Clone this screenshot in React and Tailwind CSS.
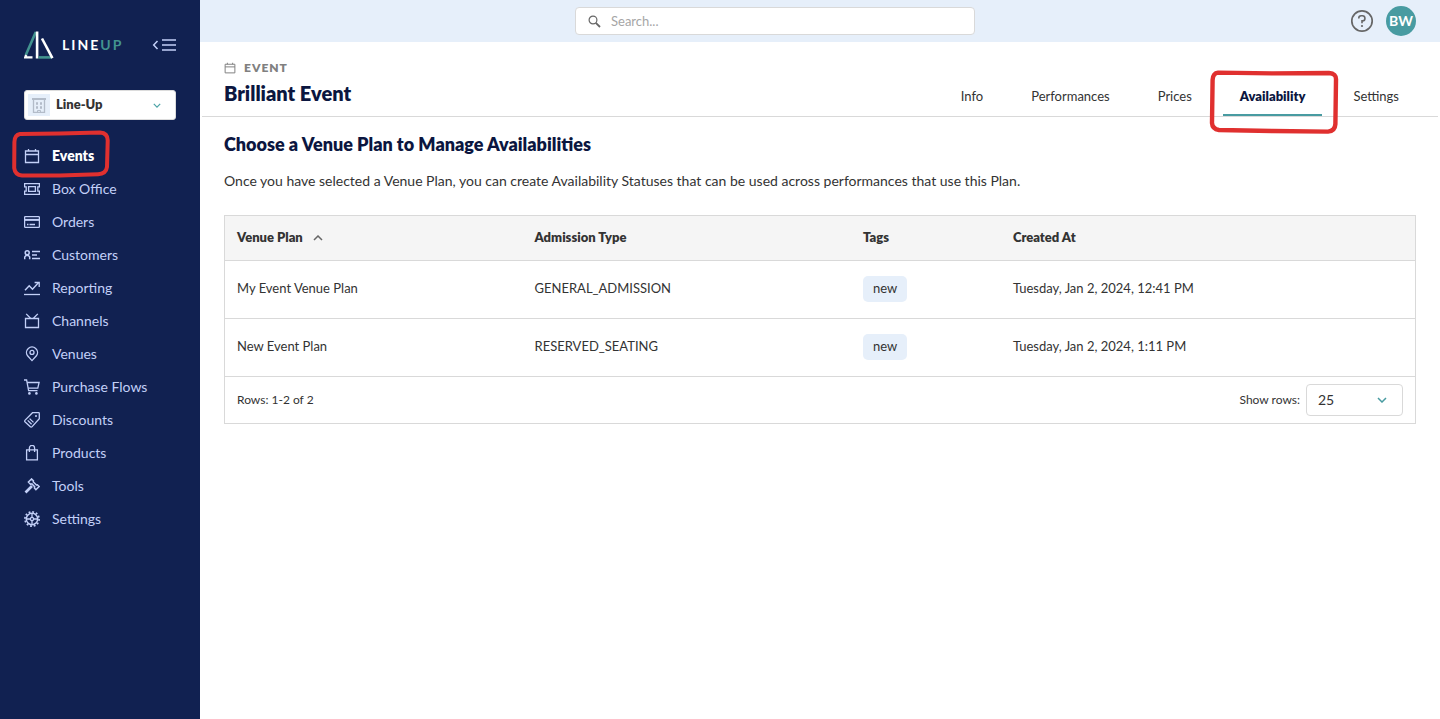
import React from 'react';

function Icon({ children, className = 'size-4', width = 1.3 }) {
  return (
    <svg
      viewBox="0 0 16 16"
      className={`${className} shrink-0`}
      fill="none"
      stroke="currentColor"
      strokeWidth={width}
      aria-hidden="true"
    >
      {children}
    </svg>
  );
}

const CalendarShape = () => (
  <>
    <path d="M1.5 3h13v11.5h-13zM1.5 6.5h13" />
    <path d="M4.5 1v2M11.5 1v2" />
  </>
);

const navItems = [
  { label: 'Events', active: true, icon: <CalendarShape /> },
  {
    label: 'Box Office',
    icon: (
      <>
        <path d="M.6 2.6h14.8v3.2h-1.6v4.4h1.6v3.2H.6v-3.2h1.6V5.8H.6z" />
        <path d="M4.6 5.6h6.8v4.8H4.6z" />
      </>
    ),
  },
  {
    label: 'Orders',
    icon: (
      <>
        <rect x=".6" y="2.6" width="14.8" height="10.8" rx=".8" />
        <path d="M1 5.9h14" strokeWidth="2" />
        <path d="M3 10.5h1.5M5.5 10.5H11" />
      </>
    ),
  },
  {
    label: 'Customers',
    icon: (
      <>
        <circle cx="3.2" cy="5.7" r="2" strokeWidth="1.5" />
        <path d="M.7 12.3v-2.2L2 8.4h2.4l1.3 1.7v2.2" strokeWidth="1.5" />
        <path d="M8 4.5h8M8 8h5M8 11.5h8" />
      </>
    ),
  },
  {
    label: 'Reporting',
    icon: (
      <>
        <path d="m1 10.3 4.2-4.6 3.3 3.5 6.1-6.6" strokeWidth="1.4" />
        <path d="M10.6 2.5h4.6v4.6" />
        <path d="M0 14.5h16" />
      </>
    ),
  },
  {
    label: 'Channels',
    icon: (
      <>
        <path d="M1.5 5.5h13v9h-13z" />
        <path d="m2.2.9 4.3 4.4M13.8.9 9.5 5.3" />
      </>
    ),
  },
  {
    label: 'Venues',
    icon: (
      <>
        <path d="M8 14.6 3.6 9.8a5.5 5.5 0 1 1 8.8 0z" />
        <circle cx="8" cy="6.4" r="2" />
      </>
    ),
  },
  {
    label: 'Purchase Flows',
    icon: (
      <>
        <path d="M0 1h2.6l2 10.6h8.9" />
        <path d="M3.1 3.5h12l-1.3 5.6H4.2" />
        <circle cx="5.4" cy="14.4" r="1.3" fill="currentColor" stroke="none" />
        <circle cx="12.4" cy="14.4" r="1.3" fill="currentColor" stroke="none" />
      </>
    ),
  },
  {
    label: 'Discounts',
    icon: (
      <>
        <path d="M15.3 1.4v5.4l-7.4 8.1a.9.9 0 0 1-1.3 0L.9 9.7a.9.9 0 0 1 0-1.3L8.5.7h6.1a.7.7 0 0 1 .7.7z" />
        <circle cx="12" cy="4.1" r="1" fill="currentColor" stroke="none" />
        <path d="m3.7 8.4 3.9 3.8M5.6 6.6l3.9 3.8" />
      </>
    ),
  },
  {
    label: 'Products',
    icon: (
      <>
        <path d="M2.6 4.9h10.8v10H2.6z" />
        <path d="M5.4 7V3a2.6 2.6 0 0 1 5.2 0v4" />
      </>
    ),
  },
  {
    label: 'Tools',
    icon: (
      <>
        <path
          d="m7.5.9-3.1 3.2 2.2 2.2 1.3-.4 2.8 2.8-.3 1.4 1.5 1.6 3.2-3.2-1.8-1.7-.9.2-3.2-3.3.2-.9z"
          strokeWidth="1.5"
        />
        <path d="M8 8 1.5 14.5" strokeWidth="2.6" />
      </>
    ),
  },
  {
    label: 'Settings',
    icon: (
      <>
        <circle cx="8" cy="8" r="5.7" strokeWidth="1.5" />
        <circle cx="8" cy="8" r="7.1" strokeWidth="1.7" strokeDasharray="1.86 1.86" />
        <circle cx="8" cy="8" r="1.6" />
        <path d="M8 2.5v4M8 9.5v4M2.5 8h4M9.5 8h4" />
      </>
    ),
  },
];

const tabs = ['Info', 'Performances', 'Prices', 'Availability', 'Settings'];

const plans = [
  { name: 'My Event Venue Plan', type: 'GENERAL_ADMISSION', tag: 'new', created: 'Tuesday, Jan 2, 2024, 12:41 PM' },
  { name: 'New Event Plan', type: 'RESERVED_SEATING', tag: 'new', created: 'Tuesday, Jan 2, 2024, 1:11 PM' },
];

function Chevron({ className }) {
  return (
    <svg viewBox="0 0 10 6" className={className} fill="none" stroke="currentColor" strokeWidth="1.5" aria-hidden="true">
      <path d="m1 1 4 4 4-4" />
    </svg>
  );
}

function Sidebar() {
  return (
    <aside className="flex w-50 shrink-0 flex-col bg-[#112151] px-6 pt-[30px]">
      <div className="flex h-[30px] items-center">
        <svg viewBox="0 0 30 30" className="size-[30px] shrink-0" fill="none" aria-hidden="true">
          <path d="M11.8 2 1.8 25" stroke="#43938f" strokeWidth="2.6" />
          <path d="m2.2 25-.9 2.4h7.2" stroke="#fff" strokeWidth="2.4" />
          <path d="M13.1 1.5v27" stroke="#fff" strokeWidth="2.6" />
          <path d="M14.5 27.4h13" stroke="#43938f" strokeWidth="2.6" />
          <path d="m18 8.5 10.4 19.6" stroke="#fff" strokeWidth="2.6" />
        </svg>
        <span className="ml-2 text-sm font-bold tracking-[2px] text-white">
          LINE<span className="text-[#43938f]">UP</span>
        </span>
        <button type="button" aria-label="Collapse menu" className="ml-auto text-[#c3d0f8]">
          <svg viewBox="0 0 24 12" className="h-3 w-6" fill="none" stroke="currentColor" aria-hidden="true">
            <path d="M5.5 2 1.7 6l3.8 4" strokeWidth="1.5" />
            <path d="M10 1h14M10 6h14M10 11h14" strokeWidth="1.4" />
          </svg>
        </button>
      </div>

      <button
        type="button"
        className="mt-[30px] flex h-[30px] items-center rounded-[3px] border border-[#dcdcdc] bg-white pl-[3px] text-[13px] font-extrabold text-[#333]"
      >
        <span className="flex size-[22px] items-center justify-center bg-[#e6effa]">
          <svg viewBox="0 0 14 15" className="h-[15px] w-[14px]" fill="none" stroke="#b3bcc9" aria-hidden="true">
            <path d="M0 1h14" strokeWidth="2" />
            <path d="M1.5 2v12.5h11V2" strokeWidth="1.3" />
            <path d="M4 5.5h2M8 5.5h2M4 9.5h2M8 9.5h2" strokeWidth="2.4" />
            <path d="M5.5 14.5v-2h3v2" />
          </svg>
        </span>
        <span className="ml-[6px]">Line-Up</span>
        <Chevron className="mr-[14px] ml-auto h-[5px] w-2 text-[#4aa3a6]" />
      </button>

      <nav className="mt-[19px]">
        <ul>
          {navItems.map((item) => (
            <li key={item.label} className="relative">
              <a
                href="#"
                className={`flex h-[33px] items-center gap-3 text-sm ${
                  item.active ? 'font-extrabold text-white' : 'text-[#c3d0f8]'
                }`}
              >
                <Icon className="size-4 text-[#c3d0f8]">{item.icon}</Icon>
                {item.label}
              </a>
              {item.active && (
                <svg
                  viewBox="0 0 98 48"
                  className="pointer-events-none absolute -top-[9px] -left-3 h-12 w-[98px]"
                  fill="none"
                  stroke="#e0302f"
                  strokeWidth="4"
                  strokeLinejoin="round"
                  aria-hidden="true"
                >
                  <path d="M8 4 48 3.4 88 2.5Q96 3 95.7 11L95 37Q94 44 86 44.2L48 45.5 10 45.4Q3 45 2.2 38L2.4 12Q2.6 5 8 4z" />
                </svg>
              )}
            </li>
          ))}
        </ul>
      </nav>
    </aside>
  );
}

function TopBar() {
  return (
    <div className="flex h-[42px] items-center bg-[#e6effa] pr-6">
      <div className="flex flex-1 justify-center">
        <div className="flex h-7 w-[400px] items-center rounded border border-[#d9d9d9] bg-white px-3">
          <svg viewBox="0 0 13 13" className="size-[13px] shrink-0 text-[#666]" fill="none" stroke="currentColor" aria-hidden="true">
            <circle cx="5" cy="5" r="3.9" strokeWidth="1.2" />
            <path d="m7.8 7.8 4.2 4.2" strokeWidth="1.8" />
          </svg>
          <input
            type="text"
            aria-label="Search"
            placeholder="Search..."
            className="ml-[10px] h-6 w-full min-w-0 bg-transparent text-[13px] text-[#333] outline-none placeholder:text-[#a6a6a6]"
          />
        </div>
      </div>
      <div className="flex items-center gap-3">
        <button type="button" aria-label="Help" className="text-[#666]">
          <svg viewBox="0 0 24 24" className="size-6" fill="none" stroke="currentColor" aria-hidden="true">
            <circle cx="12" cy="12" r="10.2" strokeWidth="1.7" />
            <path
              d="M8.8 9.6V9a2.3 2.3 0 0 1 2.3-2.3h1.4A2.4 2.4 0 0 1 14.9 9v.5a2.4 2.4 0 0 1-2.4 2.4H12v2.4"
              strokeWidth="1.6"
            />
            <circle cx="12" cy="17" r="1.1" fill="currentColor" stroke="none" />
          </svg>
        </button>
        <button type="button" className="size-[30px] rounded-full bg-[#489ba1] text-sm font-bold text-white">
          BW
        </button>
      </div>
    </div>
  );
}

function EventHeader() {
  return (
    <header className="mx-[2px] flex h-[75px] items-end justify-between border-b border-[#d9d9d9] px-[22px]">
      <div className="pb-[9px]">
        <div className="flex items-center gap-2 text-xs font-extrabold tracking-[1px] text-[#808080]">
          <Icon className="size-3">
            <CalendarShape />
          </Icon>
          EVENT
        </div>
        <h1 className="mt-[3px] text-xl leading-7 font-extrabold text-[#0b1640]">Brilliant Event</h1>
      </div>
      <nav className="flex gap-[14px]">
        {tabs.map((tab) =>
          tab === 'Availability' ? (
            <a
              key={tab}
              href="#"
              aria-current="page"
              className="relative flex h-10 items-center border-b-2 border-[#489ba1] px-[17px] pt-[3px] text-[13px] font-extrabold text-[#0b1640]"
            >
              {tab}
              <svg
                viewBox="0 0 130 64"
                className="pointer-events-none absolute -top-[6px] -left-[14px] h-16 w-[130px]"
                fill="none"
                stroke="#e0302f"
                strokeWidth="4.4"
                strokeLinejoin="round"
                aria-hidden="true"
              >
                <path d="M9 2.6 64 3.4 120 3Q127.500 3.500 127 10L126.400 54Q126 61 119 61.600L64 61 10 60Q3.400 59 3 53L3.600 10Q4 3 9 2.600z" />
              </svg>
            </a>
          ) : (
            <a
              key={tab}
              href="#"
              className="flex h-10 items-center border-b-2 border-transparent px-[17px] pt-[3px] text-[13px] text-[#333]"
            >
              {tab}
            </a>
          ),
        )}
      </nav>
    </header>
  );
}

function PlansTable() {
  return (
    <div className="mt-6 border border-[#d9d9d9] text-[#333]">
      <table className="w-full table-fixed text-left text-[13px]">
        <thead className="bg-[#f5f5f5]">
          <tr className="h-11 border-b border-[#d9d9d9]">
            <th className="w-[25%] px-3 font-extrabold">
              <button type="button" className="flex items-center gap-[10px]">
                Venue Plan
                <Chevron className="h-[6px] w-[10px] rotate-180 text-[#666]" />
              </button>
            </th>
            <th className="w-[27.6%] px-3 font-extrabold">Admission Type</th>
            <th className="w-[12.6%] px-3 font-extrabold">Tags</th>
            <th className="px-3 font-extrabold">Created At</th>
          </tr>
        </thead>
        <tbody>
          {plans.map((plan) => (
            <tr key={plan.name} className="h-[58px] border-b border-[#d9d9d9]">
              <td className="px-3">{plan.name}</td>
              <td className="px-3">{plan.type}</td>
              <td className="px-3">
                <span className="inline-flex h-[26px] items-center rounded-[5px] bg-[#e6effa] px-[10px] align-middle">
                  {plan.tag}
                </span>
              </td>
              <td className="px-3">{plan.created}</td>
            </tr>
          ))}
        </tbody>
      </table>
      <div className="flex h-[46px] items-center justify-between px-3 text-xs">
        <span>Rows: 1-2 of 2</span>
        <label className="flex items-center gap-[6px]">
          Show rows:
          <span className="relative flex items-center">
            <select
              defaultValue="25"
              className="h-8 w-[97px] appearance-none rounded border border-[#d9d9d9] bg-white pl-[11px] text-sm text-[#333]"
            >
              <option>25</option>
              <option>50</option>
              <option>100</option>
            </select>
            <Chevron className="pointer-events-none absolute right-4 h-[6px] w-[10px] text-[#489ba1]" />
          </span>
        </label>
      </div>
    </div>
  );
}

export default function App() {
  return (
    <div className="flex min-h-screen bg-white font-['Lato',sans-serif]">
      <Sidebar />
      <div className="min-w-0 flex-1">
        <TopBar />
        <EventHeader />
        <main className="px-6 pt-[13px]">
          <h2 className="text-lg leading-7 font-extrabold text-[#0b1640]">Choose a Venue Plan to Manage Availabilities</h2>
          <p className="mt-[13px] text-sm text-[#333]">
            Once you have selected a Venue Plan, you can create Availability Statuses that can be used across performances
            that use this Plan.
          </p>
          <PlansTable />
        </main>
      </div>
    </div>
  );
}
